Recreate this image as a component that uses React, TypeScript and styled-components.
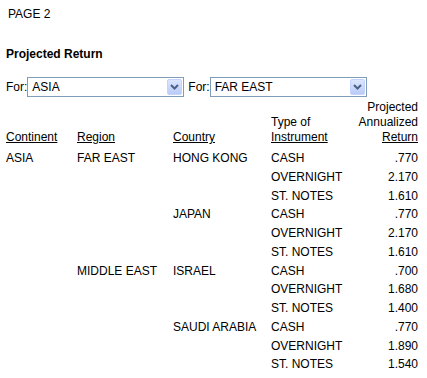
import React from "react";
import styled, { createGlobalStyle } from "styled-components";

const GlobalStyle = createGlobalStyle`
  html, body {
    margin: 0;
    padding: 0;
    background: #ffffff;
  }
  body {
    font-family: "Liberation Sans", Arial, sans-serif;
    font-size: 12px;
    color: #000000;
  }
`;

const Page = styled.div`
  padding: 7px 9px 0 6px;
  width: 412px;
`;

const PageLabel = styled.div`
  line-height: 15px;
  padding-left: 2px;
`;

const Title = styled.div`
  margin-top: 25px;
  line-height: 15px;
  font-weight: bold;
`;

const FilterBar = styled.div`
  margin-top: 15px;
  display: flex;
  align-items: center;
  height: 20px;
`;

const FilterLabel = styled.span<{ $gap?: number }>`
  line-height: 15px;
  margin-left: ${(p) => p.$gap ?? 0}px;
`;

const SelectBox = styled.div`
  box-sizing: border-box;
  width: 157px;
  height: 20px;
  border: 1px solid #7f9db9;
  background: #ffffff;
  display: flex;
  align-items: center;
  padding: 1px;
`;

const SelectValue = styled.span`
  flex: 1;
  padding-left: 3px;
  line-height: 15px;
`;

const SelectButton = styled.span`
  box-sizing: border-box;
  width: 15px;
  height: 16px;
  border: 1px solid #c3d3fd;
  border-radius: 2px;
  background: linear-gradient(#dbe6fe, #b9cbf8);
  display: flex;
  align-items: center;
  justify-content: center;
`;

const Report = styled.div`
  margin-top: 3px;
  display: grid;
  grid-template-columns: 71px 96px 98px 86px 61px;
`;

const HeadCell = styled.div<{ $right?: boolean }>`
  display: flex;
  flex-direction: column;
  justify-content: flex-end;
  align-items: ${(p) => (p.$right ? "flex-end" : "flex-start")};
  text-align: ${(p) => (p.$right ? "right" : "left")};
  line-height: 15px;
  padding: 0 0 4px;
`;

const Underlined = styled.span`
  text-decoration: underline;
`;

const Cell = styled.div<{ $right?: boolean }>`
  height: 18.75px;
  line-height: 19px;
  white-space: nowrap;
  text-align: ${(p) => (p.$right ? "right" : "left")};
`;

type Row = {
  continent?: string;
  region?: string;
  country?: string;
  instrument: string;
  value: string;
};

const rows: Row[] = [
  { continent: "ASIA", region: "FAR EAST", country: "HONG KONG", instrument: "CASH", value: ".770" },
  { instrument: "OVERNIGHT", value: "2.170" },
  { instrument: "ST. NOTES", value: "1.610" },
  { country: "JAPAN", instrument: "CASH", value: ".770" },
  { instrument: "OVERNIGHT", value: "2.170" },
  { instrument: "ST. NOTES", value: "1.610" },
  { region: "MIDDLE EAST", country: "ISRAEL", instrument: "CASH", value: ".700" },
  { instrument: "OVERNIGHT", value: "1.680" },
  { instrument: "ST. NOTES", value: "1.400" },
  { country: "SAUDI ARABIA", instrument: "CASH", value: ".770" },
  { instrument: "OVERNIGHT", value: "1.890" },
  { instrument: "ST. NOTES", value: "1.540" },
];

const Chevron = () => (
  <svg width="9" height="6" viewBox="0 0 9 6">
    <path d="M1 1 L4.5 4.5 L8 1" fill="none" stroke="#4d6185" strokeWidth="2" />
  </svg>
);

const Dropdown = ({ value }: { value: string }) => (
  <SelectBox>
    <SelectValue>{value}</SelectValue>
    <SelectButton>
      <Chevron />
    </SelectButton>
  </SelectBox>
);

export default function App() {
  return (
    <>
      <GlobalStyle />
      <Page>
        <PageLabel>PAGE 2</PageLabel>
        <Title>Projected Return</Title>
        <FilterBar>
          <FilterLabel>For:</FilterLabel>
          <Dropdown value="ASIA" />
          <FilterLabel $gap={4}>For:</FilterLabel>
          <Dropdown value="FAR EAST" />
        </FilterBar>
        <Report>
          <HeadCell>
            <Underlined>Continent</Underlined>
          </HeadCell>
          <HeadCell>
            <Underlined>Region</Underlined>
          </HeadCell>
          <HeadCell>
            <Underlined>Country</Underlined>
          </HeadCell>
          <HeadCell>
            <span>Type of</span>
            <Underlined>Instrument</Underlined>
          </HeadCell>
          <HeadCell $right>
            <span>Projected</span>
            <span>Annualized</span>
            <Underlined>Return</Underlined>
          </HeadCell>
          {rows.map((r, i) => (
            <React.Fragment key={i}>
              <Cell>{r.continent ?? ""}</Cell>
              <Cell>{r.region ?? ""}</Cell>
              <Cell>{r.country ?? ""}</Cell>
              <Cell>{r.instrument}</Cell>
              <Cell $right>{r.value}</Cell>
            </React.Fragment>
          ))}
        </Report>
      </Page>
    </>
  );
}
